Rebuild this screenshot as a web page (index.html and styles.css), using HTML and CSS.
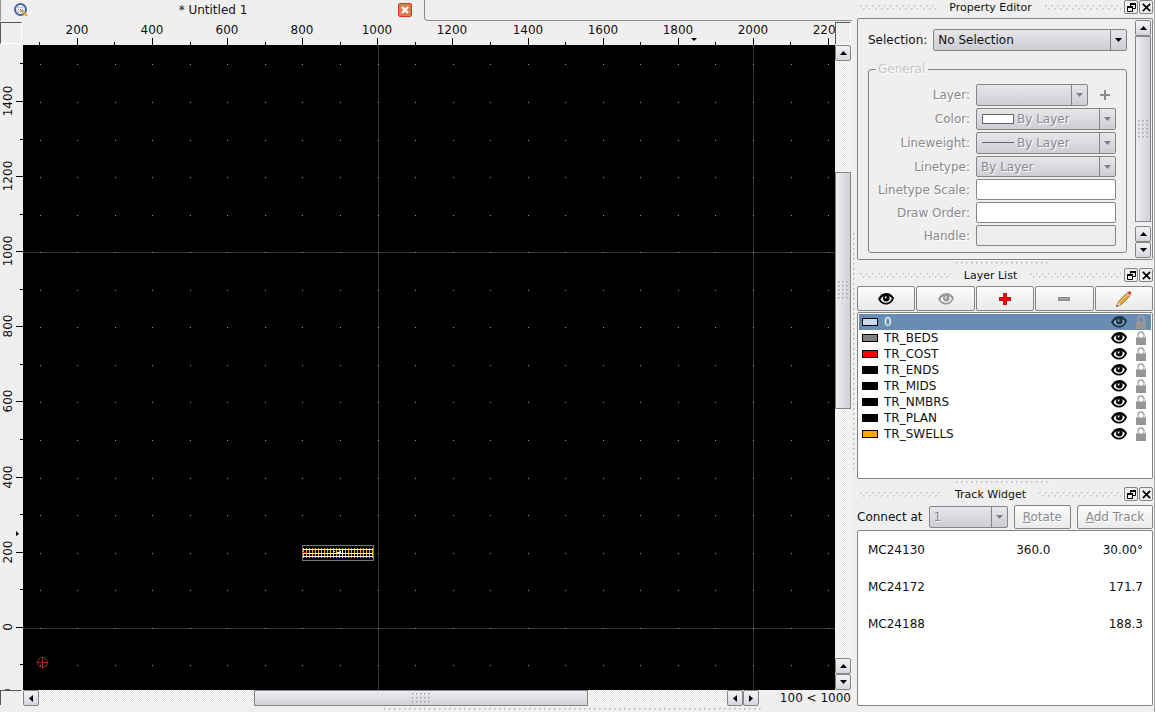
FILE: index.html
```
<!DOCTYPE html>
<html lang="en">
<head>
<meta charset="utf-8">
<title>Untitled 1</title>
<link rel="stylesheet" href="styles.css">
</head>
<body>
<svg class="defs" aria-hidden="true">
  <symbol id="eye" viewBox="0 0 16 12"><path d="M0 6C2 2 4.500 0 8.500 0 12 0 14.500 2 16 5c-1.500 4-4 6.500-8 6.500C4.500 11.500 1.500 9.500 0 6z" fill="currentColor"/><path d="M2.500 6.500C3.500 4 5.500 2.800 8.300 2.800c2.600 0 4.400 1 5.500 2.700C12.500 8.500 10.700 9.700 8 9.700 5.500 9.700 3.500 8.500 2.500 6.500z" fill="var(--eye-white, #fff)"/><circle cx="8.300" cy="5.200" r="3.300" fill="currentColor"/><path d="M6.600 5.200q0-2 1.900-2.200q-.7 1.200.3 2.500z" fill="var(--eye-white, #fff)"/></symbol>
  <symbol id="lock" viewBox="0 0 10 14"><path d="M2 7V4.200a3 3.200 0 0 1 6 0V7" fill="none" stroke="#a6a6a6" stroke-width="1.300"/><path d="M0 6.500h10V14H0z" fill="#979797"/></symbol>
  <symbol id="up" viewBox="0 0 7 4"><path d="M0 4 3.500 0 7 4z" fill="currentColor"/></symbol>
  <symbol id="down" viewBox="0 0 7 4"><path d="M0 0h7L3.500 4z" fill="currentColor"/></symbol>
  <symbol id="left" viewBox="0 0 4 7"><path d="M4 0v7L0 3.500z" fill="currentColor"/></symbol>
  <symbol id="right" viewBox="0 0 4 7"><path d="M0 0v7l4-3.500z" fill="currentColor"/></symbol>
  <symbol id="float" viewBox="0 0 9 9"><path d="M3.500 3V.5h5v5H6" fill="none" stroke="#000"/><path d="M3 0h6v2H3z"/><path d="M.5 3.500h5v5h-5z" fill="#eee" stroke="#000"/><path d="M0 3h6v2H0z"/></symbol>
  <symbol id="close" viewBox="0 0 9 9"><path d="m.8.8 7.400 7.400m0-7.400L.8 8.200" stroke="#000" stroke-width="1.700"/></symbol>
</svg>
<div class="app">
  <main class="workspace">
    <header class="tabs">
      <div class="tab">
        <svg class="tab-logo" width="14" height="14" viewBox="0 0 14 14"><circle cx="6.500" cy="6.500" r="5.500" fill="#f6f6f8" stroke="#45639c" stroke-width="2"/><path d="M3 4.500h7M3 8h7M4.500 3v7M8.500 3v7" stroke="#b8bcc8" stroke-width=".8"/><path d="m7.500 7.500 5.500 5.500" stroke="#e5a535" stroke-width="2.400"/><path d="m6 6 2 2" stroke="#555" /></svg>
        <span class="tab-title">* Untitled 1</span>
        <button class="tab-close" aria-label="Close tab"><svg width="8" height="8" viewBox="0 0 8 8"><path d="m1 1 6 6m0-6L1 7" stroke="#fff" stroke-width="2.400"/></svg></button>
      </div>
      <div class="tab-rest"></div>
    </header>
    <div class="view">
      <div class="corner"></div>
      <svg class="ruler-x" id="ruler-x"></svg>
      <div class="corner corner-right"></div>
      <svg class="ruler-y" id="ruler-y"></svg>
      <svg class="drawing" id="drawing"></svg>
      <div class="scroll scroll-v">
        <button class="step" aria-label="Up"><svg width="7" height="4"><use href="#up"/></svg></button>
        <div class="trough main-v"><div class="thumb"><i class="grip"></i></div></div>
        <button class="step" aria-label="Up"><svg width="7" height="4"><use href="#up"/></svg></button>
        <button class="step" aria-label="Down"><svg width="7" height="4"><use href="#down"/></svg></button>
      </div>
      <div class="corner corner-bottom"></div>
      <div class="footer">
        <div class="scroll scroll-h">
          <button class="step" aria-label="Left"><svg width="4" height="7"><use href="#left"/></svg></button>
          <div class="trough main-h"><div class="thumb"><i class="grip"></i></div></div>
          <button class="step" aria-label="Left"><svg width="4" height="7"><use href="#left"/></svg></button>
          <button class="step" aria-label="Right"><svg width="4" height="7"><use href="#right"/></svg></button>
        </div>
        <span class="grid-info">100 &lt; 1000</span>
      </div>
    </div>
    <div class="handle-bottom"><i class="dots dots-bottom"></i></div>
  </main>
  <div class="handle-side"><i class="dots dots-side"></i></div>
  <aside class="docks">
    <section class="dock">
      <header class="dock-title"><i class="wave"></i><h2>Property Editor</h2><i class="wave"></i><button class="mini" aria-label="Float"><svg width="9" height="9"><use href="#float"/></svg></button><button class="mini" aria-label="Close"><svg width="9" height="9"><use href="#close"/></svg></button></header>
      <div class="frame properties">
        <form class="form">
          <div class="selection"><label for="sel">Selection:</label><span class="combo"><select id="sel"><option>No Selection</option></select><svg width="7" height="4"><use href="#down"/></svg></span></div>
          <fieldset disabled>
            <legend>General</legend>
            <label for="layer">Layer:</label>
            <div class="layer-row"><span class="combo"><select id="layer"><option></option></select><svg width="7" height="4"><use href="#down"/></svg></span><button class="plus" type="button" aria-label="Add layer"><svg width="10" height="10"><path d="M5 0v10M0 5h10" stroke="#8c8c8c" stroke-width="2"/></svg></button></div>
            <label for="color">Color:</label>
            <span class="combo with-sample"><select id="color"><option>By Layer</option></select><i class="sample-color"></i><svg width="7" height="4"><use href="#down"/></svg></span>
            <label for="weight">Lineweight:</label>
            <span class="combo with-sample"><select id="weight"><option>By Layer</option></select><i class="sample-line"></i><svg width="7" height="4"><use href="#down"/></svg></span>
            <label for="type">Linetype:</label>
            <span class="combo short"><select id="type"><option>By Layer</option></select><svg width="7" height="4"><use href="#down"/></svg></span>
            <label for="scale">Linetype Scale:</label><input id="scale" type="text">
            <label for="order">Draw Order:</label><input id="order" type="text">
            <label for="hand">Handle:</label><input id="hand" class="readonly" type="text">
          </fieldset>
        </form>
        <div class="scroll scroll-v">
          <button class="step" aria-label="Up"><svg width="7" height="4"><use href="#up"/></svg></button>
          <div class="trough prop-v"><div class="thumb"><i class="grip"></i></div></div>
          <button class="step" aria-label="Up"><svg width="7" height="4"><use href="#up"/></svg></button>
          <button class="step" aria-label="Down"><svg width="7" height="4"><use href="#down"/></svg></button>
        </div>
      </div>
    </section>
    <div class="handle-dock"><i class="dots"></i></div>
    <section class="dock">
      <header class="dock-title"><i class="wave"></i><h2>Layer List</h2><i class="wave"></i><button class="mini" aria-label="Float"><svg width="9" height="9"><use href="#float"/></svg></button><button class="mini" aria-label="Close"><svg width="9" height="9"><use href="#close"/></svg></button></header>
      <div class="tools">
        <button aria-label="Show all"><svg width="16" height="12"><use href="#eye"/></svg></button>
        <button aria-label="Hide all" class="dim"><svg width="16" height="12"><use href="#eye"/></svg></button>
        <button aria-label="Add layer"><svg width="12" height="12"><path d="M6 0v12M0 6h12" stroke="#4a3030" stroke-width="4"/><path d="M6 0v12M0 6h12" stroke="#f00" stroke-width="3"/></svg></button>
        <button aria-label="Remove layer"><svg width="12" height="4"><path d="M0 0h12v4H0z" fill="#8b8b8b"/><path d="M1 1h10v2H1z" fill="#a0a0a0"/></svg></button>
        <button aria-label="Edit layer"><svg width="16" height="16" viewBox="0 0 16 16"><path d="m.5 15.500 1.500-4.500 9.500-9.500 3 3L5 14z" fill="#dda23c" stroke="#8b6428" stroke-width=".8"/><path d="m3 12 9-9" stroke="#f7d783"/><path d="m.5 15.500 1.500-4.500L5 14z" fill="#e5ceb0"/><path d="m.5 15.500.6-1.800 1.200 1.200z" fill="#222"/><path d="m10.500 2.500 3 3 1-1-3-3z" fill="#c8c8c8"/><path d="m11.700 1.500 1-1q1-.7 2 .3t.5 2l-1 1z" fill="#dc3528"/></svg></button>
      </div>
      <ul class="frame layers" id="layers">
        <li class="selected"><i class="swatch pale"></i><span>0</span><svg class="eye" width="16" height="12"><use href="#eye"/></svg><svg width="10" height="14"><use href="#lock"/></svg></li>
        <li><i class="swatch gray"></i><span>TR_BEDS</span><svg class="eye" width="16" height="12"><use href="#eye"/></svg><svg width="10" height="14"><use href="#lock"/></svg></li>
        <li><i class="swatch red"></i><span>TR_COST</span><svg class="eye" width="16" height="12"><use href="#eye"/></svg><svg width="10" height="14"><use href="#lock"/></svg></li>
        <li><i class="swatch"></i><span>TR_ENDS</span><svg class="eye" width="16" height="12"><use href="#eye"/></svg><svg width="10" height="14"><use href="#lock"/></svg></li>
        <li><i class="swatch"></i><span>TR_MIDS</span><svg class="eye" width="16" height="12"><use href="#eye"/></svg><svg width="10" height="14"><use href="#lock"/></svg></li>
        <li><i class="swatch"></i><span>TR_NMBRS</span><svg class="eye" width="16" height="12"><use href="#eye"/></svg><svg width="10" height="14"><use href="#lock"/></svg></li>
        <li><i class="swatch"></i><span>TR_PLAN</span><svg class="eye" width="16" height="12"><use href="#eye"/></svg><svg width="10" height="14"><use href="#lock"/></svg></li>
        <li><i class="swatch orange"></i><span>TR_SWELLS</span><svg class="eye" width="16" height="12"><use href="#eye"/></svg><svg width="10" height="14"><use href="#lock"/></svg></li>
      </ul>
    </section>
    <div class="handle-dock"><i class="dots"></i></div>
    <section class="dock grow">
      <header class="dock-title"><i class="wave"></i><h2>Track Widget</h2><i class="wave"></i><button class="mini" aria-label="Float"><svg width="9" height="9"><use href="#float"/></svg></button><button class="mini" aria-label="Close"><svg width="9" height="9"><use href="#close"/></svg></button></header>
      <div class="connect"><label for="conn">Connect at</label><span class="combo"><select id="conn" disabled><option>1</option></select><svg width="7" height="4"><use href="#down"/></svg></span><button class="push" disabled><u>R</u>otate</button><button class="push add" disabled><u>A</u>dd Track</button></div>
      <div class="frame tracks">
        <table>
          <tr><td>MC24130</td><td>360.0</td><td>30.00°</td></tr>
          <tr><td>MC24172</td><td></td><td>171.7</td></tr>
          <tr><td>MC24188</td><td></td><td>188.3</td></tr>
        </table>
      </div>
    </section>
  </aside>
</div>
<script src="view.js"></script>
</body>
</html>
```
FILE: styles.css
```
* { box-sizing: border-box; }
body { margin: 0; background: #efefef; color: #111; font: 12px/16px "DejaVu Sans", sans-serif; }
svg { display: block; flex: none; }
button, select, input { font: inherit; color: inherit; margin: 0; padding: 0; }
.defs { position: absolute; width: 0; height: 0; }
.app { display: grid; grid-template-columns: minmax(0, 1fr) 5px 297px; height: 100vh; border-right: 1px solid #a8a8a8; overflow: hidden; }

.workspace { display: flex; flex-direction: column; min-width: 0; min-height: 0; }
.tabs { display: flex; height: 21px; flex: none; }
.tab { display: flex; align-items: center; width: 424px; padding: 0 12px 1px 13px; border-left: 1px solid #999; }
.tab-title { flex: 1; text-align: center; }
.tab-close { display: grid; place-items: center; width: 14px; height: 14px; background: #e07b50; border: 1px solid #d8331c; border-radius: 2px; }
.tab-rest { flex: 1; border-left: 1px solid #8c8c8c; border-bottom: 1px solid #8c8c8c; border-bottom-left-radius: 4px; }

.view { flex: 1; min-height: 0; display: grid; grid-template-columns: 23px minmax(0, 1fr) 16px; grid-template-rows: 24px minmax(0, 1fr) 16px; padding-right: 1px; }
.ruler-x, .ruler-y, .drawing { width: 100%; height: 100%; overflow: hidden; }
.ruler-x text, .ruler-y text { font-size: 12px; fill: #111; text-anchor: middle; }
.drawing { background: #000; }
.corner { margin: 1px 1px 1px 0; border: 1px solid; border-color: #555 #fff #fff #555; }
.corner-right { margin: 1px 0 0; }
.corner-bottom { margin: 0 1px 1px 0; border-bottom: 0; }
.footer { display: grid; grid-template-columns: minmax(0, 736px) auto; justify-content: space-between; grid-column: 2 / 4; }
.grid-info { white-space: nowrap; }
.handle-bottom { display: flex; justify-content: center; align-items: flex-end; flex: none; height: 6px; padding-left: 293px; }
.handle-side { display: flex; align-items: center; justify-content: flex-end; padding-bottom: 10px; }
.handle-dock { display: flex; justify-content: center; align-items: center; height: 8px; flex: none; padding-right: 3px; }
.dots { width: 95px; height: 4px; background: url("data:image/svg+xml,%3Csvg xmlns='http://www.w3.org/2000/svg' width='5' height='5'%3E%3Cpath d='M0 0h2v2H0z' fill='%23c6c6c6'/%3E%3Cpath d='M1 2h2V1H2' fill='%23fff'/%3E%3C/svg%3E"); }
.dots-bottom { width: 378px; }
.dots-side { width: 4px; height: 236px; }

.scroll { display: flex; min-width: 0; min-height: 0; }
.scroll-v { flex-direction: column; }
.step { display: grid; place-items: center; flex: none; width: 16px; height: 16px; background: linear-gradient(#f4f4f7, #d6d6dc); border: 1px solid #858585; border-radius: 2px; color: #000; }
.trough { display: grid; flex: 1; min-width: 0; min-height: 0; background: #fff url("data:image/svg+xml,%3Csvg xmlns='http://www.w3.org/2000/svg' width='2' height='2'%3E%3Cpath d='M0 0h1v1H0zM1 1h1v1H1z' fill='%23e4e4e4'/%3E%3C/svg%3E"); }
.main-v { grid-template-rows: 111fr 238fr 249fr; }
.main-h { grid-template-columns: 215fr 334fr 139fr; }
.prop-v { grid-template-rows: 0 187fr 4fr; }
.thumb { grid-row: 2; display: grid; place-items: center; border: 1px solid #858585; background: linear-gradient(90deg, #ededf2, #d0d0d8); }
.main-h .thumb { grid-row: 1; grid-column: 2; background: linear-gradient(#ededf2, #d0d0d8); }
.grip { width: 10px; height: 19px; background: url("data:image/svg+xml,%3Csvg xmlns='http://www.w3.org/2000/svg' width='4' height='4'%3E%3Cpath d='M0 0h2v2H0z' fill='%23b2b2b9'/%3E%3Cpath d='M1 2h2V1H2' fill='%23fff'/%3E%3C/svg%3E"); }
.main-h .grip { width: 19px; height: 10px; }

.docks { display: flex; flex-direction: column; min-height: 0; padding-right: 1px; }
.dock { display: flex; flex-direction: column; flex: none; }
.grow { flex: 1; min-height: 0; padding-bottom: 6px; }
.dock-title { display: flex; align-items: center; height: 14px; gap: 1px; }
.dock-title h2 { margin: 0; padding: 2px 9px 0 10px; font-size: 11px; line-height: 14px; font-weight: normal; white-space: nowrap; }
.wave { flex: 1; height: 5px; margin: 0 2px 0 3px; background: url("data:image/svg+xml,%3Csvg xmlns='http://www.w3.org/2000/svg' width='6' height='5'%3E%3Cpath d='M0 0h2v2H0zM3 3h2v2H3z' fill='%23cecece'/%3E%3Cpath d='M1 2h2V1H2M4 5h2V4H5' fill='%23fff'/%3E%3C/svg%3E"); }
.mini { display: grid; place-items: center; width: 14px; height: 14px; flex: none; background: #efefef; border: 1px solid #858585; border-radius: 2px; }
.frame { border: 1px solid #858585; border-radius: 2px; }

.properties { display: flex; margin-top: 4px; padding: 1px; }
.form { flex: 1; min-width: 0; padding: 9px 8px 5px 9px; }
.selection { display: flex; align-items: center; gap: 6px; }
.combo { position: relative; display: flex; flex: 1; min-width: 0; }
.combo select { appearance: none; width: 100%; height: 22px; padding: 0 18px 0 4px; border: 1px solid #858585; border-radius: 2px; background: linear-gradient(90deg, transparent calc(100% - 16px), #858585 calc(100% - 16px), #858585 calc(100% - 15px), transparent calc(100% - 15px)), linear-gradient(#e6e6eb, #cdcdd4); }
.combo svg { position: absolute; right: 5px; top: 9px; color: #000; pointer-events: none; }
.combo select:disabled { color: #8a8a8a; opacity: 1; text-shadow: 1px 1px #fff; }
.combo select:disabled ~ svg { color: #808080; }
.short select { height: 21px; }
.with-sample select { padding-left: 40px; }
.sample-color, .sample-line { position: absolute; left: 6px; width: 32px; border: 1px solid #666; }
.sample-color { top: 6px; height: 10px; background: #fff; }
.sample-line { top: 10px; height: 1px; border-width: 1px 0 0; }
fieldset { display: grid; grid-template-columns: minmax(0, 1fr) 140px; gap: 2px 6px; align-items: center; margin: 10px 0 0; padding: 7px 10px 6px 9px; border: 1px solid #858585; border-radius: 3px; color: #8a8a8a; text-shadow: 1px 1px #fff; min-width: 0; }
fieldset label { text-align: right; white-space: nowrap; }
legend { padding: 0 3px 0 2px; color: #c6c6c6; line-height: 16px; margin-left: -2px; }
.layer-row { display: flex; gap: 12px; padding-right: 6px; align-items: center; }
.plus { display: grid; border: 0; background: none; }
input { width: 100%; height: 21px; border: 1px solid #858585; border-radius: 2px; background: #fff; }
.readonly { background: #ededed; }

.tools { display: grid; grid-template-columns: repeat(5, 1fr); gap: 1px; margin-top: 4px; }
.tools button { display: grid; place-items: center; height: 25px; border: 1px solid #858585; border-radius: 2px; background: linear-gradient(#fbfbfb, #eaeaea); color: #000; }
.tools .dim { color: #999; }
.layers { list-style: none; margin: 1px 0 0; padding: 1px 1px 0; height: 167px; background: #fff; }
.layers li { display: flex; align-items: center; height: 16px; padding: 0 5px 0 3px; gap: 9px; color: #111; }
.layers span { flex: 1; margin-left: -3px; }
.layers .selected { background: #678db2; color: #fff; }
.layers .selected .eye { color: #1d3346; --eye-white: #8fb0cd; }
.eye { color: #000; }
.swatch { width: 16px; height: 8px; border: 1px solid #000; background: #000; }
.pale { background: #cddbe8; }
.gray { background: #808080; }
.red { background: #f00; }
.orange { background: #ffa500; }

.connect { display: grid; grid-template-columns: auto minmax(0, 79px) 57px 76px; align-items: center; justify-content: space-between; margin-top: 4px; height: 24px; }
.push { height: 24px; border: 1px solid #858585; border-radius: 2px; background: linear-gradient(#fbfbfb, #eaeaea); color: #8a8a8a; text-shadow: 1px 1px #fff; white-space: nowrap; }
.tracks { flex: 1; min-height: 0; margin-top: 1px; background: #fff; }
table { width: 100%; border-collapse: collapse; table-layout: fixed; }
td { height: 37px; padding: 0 9px 0 10px; text-align: right; }
td:first-child { text-align: left; width: 109px; padding-right: 0; }
```
FILE: view.js
```
const NS = "http://www.w3.org/2000/svg";
const UNIT = 0.3755;
const ORIGIN = { x: -21, y: 582.7 };

function add(parent, tag, attrs, text) {
  const el = document.createElementNS(NS, tag);
  for (const key in attrs) el.setAttribute(key, attrs[key]);
  if (text !== undefined) el.textContent = text;
  parent.appendChild(el);
  return el;
}
function rect(parent, x, y, width, height, fill) {
  return add(parent, "rect", { x, y, width, height, fill });
}

function drawRulers() {
  const rx = document.getElementById("ruler-x");
  const ry = document.getElementById("ruler-y");
  rx.replaceChildren();
  ry.replaceChildren();
  for (let v = 100; ORIGIN.x + v * UNIT < rx.clientWidth; v += 100) {
    const x = Math.round(ORIGIN.x - 0.2 + v * UNIT);
    const major = v % 200 === 0;
    rect(rx, x, major ? 17 : 21, 1, major ? 7 : 3, "#000");
    if (major) add(rx, "text", { x, y: 13 }, v);
  }
  for (let v = -200; ORIGIN.y - v * UNIT > 0; v += 100) {
    const y = Math.round(ORIGIN.y - 1 - v * UNIT);
    const major = v % 200 === 0;
    rect(ry, major ? 16 : 20, y, major ? 7 : 3, 1, "#000");
    if (major) add(ry, "text", { transform: `translate(12 ${y}) rotate(-90)` }, v);
  }
  add(rx, "path", { d: "M668 17h6l-3 3z" });
  add(ry, "path", { d: "M16 486v5l3-2z" });
}

function drawPlan() {
  const plan = document.getElementById("drawing");
  plan.replaceChildren();
  const w = plan.clientWidth;
  const h = plan.clientHeight;
  for (let v = 1000; v * UNIT < w + 50; v += 1000) rect(plan, Math.round(ORIGIN.x + v * UNIT), 0, 1, h, "#333");
  for (let v = 0; v * UNIT < h; v += 1000) rect(plan, 0, Math.round(ORIGIN.y - v * UNIT), w, 1, "#333");
  for (let a = 100; a * UNIT < w + 50; a += 100) {
    for (let b = -100; b * UNIT < h; b += 100) {
      rect(plan, Math.round(ORIGIN.x + a * UNIT), Math.round(ORIGIN.y - b * UNIT), 1, 1, "#999");
    }
  }
  for (let x = 280; x <= 350; x += 3) rect(plan, x, 503, 1, 10, "#ffa500");
  for (const y of [504, 508, 511]) rect(plan, 280, y, 70, 1, "#fff");
  rect(plan, 280, 507, 4, 1, "#f00");
  add(plan, "path", { d: "M311 506h1v1h-1zM314 507h3v1h-3zM317 506h1v3h-1zM319 505h1v5h-1z", fill: "#fff" });
  add(plan, "rect", { x: 279.5, y: 500.5, width: 71, height: 15, fill: "none", stroke: "#777" });
  add(plan, "path", { d: "M14 617.500h11M19.500 612v11M19.500 612.500a5 5 0 1 1 0 10a5 5 0 1 1 0-10", fill: "none", stroke: "#b02020" });
}

function draw() {
  drawRulers();
  drawPlan();
}
draw();
window.addEventListener("resize", draw);
```
